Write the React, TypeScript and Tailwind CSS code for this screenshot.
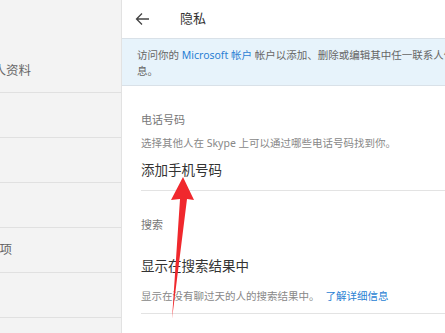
import React from 'react'

const font = { fontFamily: '"Noto Sans", "Noto Sans CJK SC", sans-serif' }

const App = () => {
  return (
    <div className="relative flex h-[333px] w-[445px] overflow-hidden bg-white" style={font}>
      {/* left nav */}
      <div className="w-[122px] shrink-0 border-r border-[#e2e2e2] bg-[#f3f3f3] text-[12.5px] text-[#666]">
        <div className="h-[93px] border-b border-[#e0e0e0] pt-[62px]">
          <div className="ml-[-19px] whitespace-nowrap leading-[18px]">个人资料</div>
        </div>
        <div className="h-[45px] border-b border-[#e0e0e0]"></div>
        <div className="h-[45px] border-b border-[#e0e0e0]"></div>
        <div className="h-[45px] border-b border-[#e0e0e0]"></div>
        <div className="flex h-[45px] items-center border-b border-[#e0e0e0]">
          <div className="ml-[-13px] whitespace-nowrap">选项</div>
        </div>
        <div className="h-[45px] border-b border-[#e0e0e0]"></div>
      </div>

      {/* right panel */}
      <div className="flex-1">
        <div className="flex h-[38px] items-center">
          <svg className="ml-[13px]" width="16" height="14" viewBox="0 0 16 14" fill="none" stroke="#444" strokeWidth="1.3">
            <path d="M14 7H2M7 1.5L1.5 7L7 12.5" />
          </svg>
          <div className="ml-[29px] text-[13px] text-[#333]">隐私</div>
        </div>

        <div className="border-y border-[#d9e1e8] bg-[#e7f3fb] px-[15px] pt-[8px] pb-[6px] text-[10.5px] leading-[16px] text-[#666]">
          <div className="whitespace-nowrap">
            访问你的 <span className="text-[#2a7fd4]">Microsoft 帐户</span> 帐户以添加、删除或编辑其中任一联系人信
          </div>
          <div>息。</div>
        </div>

        <div className="ml-[19px] border-b border-[#e3e3e3] pt-[26px] pb-[10px]">
          <div className="text-[11px] leading-[16px] text-[#777]">电话号码</div>
          <div className="mt-[7px] whitespace-nowrap text-[10.5px] leading-[16px] text-[#888]">
            选择其他人在 Skype 上可以通过哪些电话号码找到你。
          </div>
          <div className="mt-[9px] text-[13.5px] leading-[20px] text-[#333]">添加手机号码</div>
        </div>

        <div className="ml-[19px] border-b border-[#e3e3e3] pt-[26px] pb-[9px]">
          <div className="text-[11px] leading-[16px] text-[#777]">搜索</div>
          <div className="mt-[23px] text-[13.5px] leading-[20px] text-[#333]">显示在搜索结果中</div>
          <div className="mt-[12px] whitespace-nowrap text-[10.5px] leading-[16px] text-[#888]">
            显示在没有聊过天的人的搜索结果中。
            <span className="ml-[6px] text-[#2a7fd4]">了解详细信息</span>
          </div>
        </div>
      </div>

      {/* red annotation arrow */}
      <svg className="pointer-events-none absolute left-0 top-0" width="445" height="333">
        <polygon points="183,177 194,200 187,199 172,319 180,199 171,200" fill="#f0282d" />
      </svg>
    </div>
  )
}

export default App
